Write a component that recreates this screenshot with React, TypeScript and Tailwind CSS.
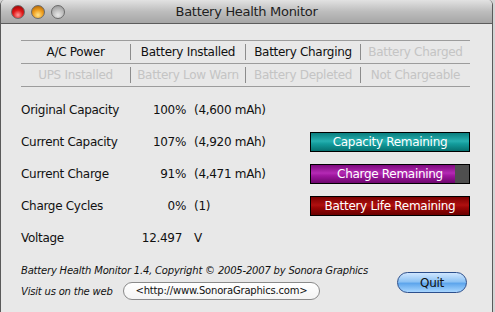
import React from "react";

const font = "font-['DejaVu_Sans',sans-serif]";

const statusRows = [
  [
    { label: "A/C Power", on: true },
    { label: "Battery Installed", on: true },
    { label: "Battery Charging", on: true },
    { label: "Battery Charged", on: false },
  ],
  [
    { label: "UPS Installed", on: false },
    { label: "Battery Low Warn", on: false },
    { label: "Battery Depleted", on: false },
    { label: "Not Chargeable", on: false },
  ],
];

const colWidths = ["w-[109px]", "w-[114px]", "w-[114px]", "w-[109px]"];

interface BarProps {
  label: string;
  pct: number;
  fill: string;
}

const Bar = ({ label, pct, fill }: BarProps) => (
  <div className="relative w-[160px] h-[20px] border border-black bg-[#4f4f4f] overflow-hidden">
    <div className={`h-full ${fill}`} style={{ width: `${pct}%` }} />
    <div className="absolute inset-0 flex items-center justify-center text-white text-[12px] tracking-[-0.3px]">
      {label}
    </div>
  </div>
);

interface DataRowProps {
  label: string;
  value: string;
  extra: string;
  bar?: BarProps;
  valueClass?: string;
}

const DataRow = ({ label, value, extra, bar, valueClass }: DataRowProps) => (
  <div className="flex items-center h-[32px]">
    <div className="w-[120px]">{label}</div>
    <div className={`w-[45px] text-right ${valueClass ?? ""}`}>{value}</div>
    <div className="w-[124px] pl-[8px]">{extra}</div>
    {bar && <Bar {...bar} />}
  </div>
);

const Light = ({ color }: { color: string }) => (
  <div className={`w-[14px] h-[14px] rounded-full border border-[#6a6a6a] ${color}`} />
);

export default function App() {
  return (
    <div className={`w-[495px] h-[312px] overflow-hidden bg-[#d4d4d4] ${font}`}>
      <div className="w-[493px] h-[312px] border-l border-r border-[#5a5a5a] rounded-t-[5px] overflow-hidden bg-[#e8e8e8]">
        {/* title bar */}
        <div className="relative h-[24px] flex items-center border-b border-[#5c5c5c] bg-[linear-gradient(#e2e2e2,#bdbdbd_50%,#a6a6a6)]">
          <div className="flex items-center gap-[6px] pl-[10px]">
            <Light color="bg-[radial-gradient(circle_at_50%_75%,#ff9a9a,#e01818_45%,#8a0000)]" />
            <Light color="bg-[radial-gradient(circle_at_50%_75%,#ffe48a,#f0a020_45%,#a05800)]" />
            <Light color="bg-[radial-gradient(circle_at_50%_75%,#e8e8e8,#bcbcbc_50%,#909090)]" />
          </div>
          <div className="absolute inset-0 flex items-center justify-center text-[13px] text-[#1e1e1e] tracking-[-0.3px]">
            Battery Health Monitor
          </div>
        </div>

        <div className="pl-[20px] pt-[16px] text-[12px] tracking-[-0.3px] text-[#111]">
          {/* status grid */}
          <div className="w-[449px] border-t border-[#9c9c9c]">
            {statusRows.map((row, i) => (
              <div key={i} className="flex items-center h-[23px] border-b border-[#9c9c9c]">
                {row.map((cell, j) => (
                  <React.Fragment key={cell.label}>
                    {j > 0 && <div className="w-px h-[16px] bg-[#8c8c8c]" />}
                    <div
                      className={`${colWidths[j]} text-center ${cell.on ? "text-[#111]" : "text-[#c4c4c4]"}`}
                    >
                      {cell.label}
                    </div>
                  </React.Fragment>
                ))}
              </div>
            ))}
          </div>

          {/* readings */}
          <div className="mt-[7px]">
            <DataRow label="Original Capacity" value="100%" extra="(4,600 mAh)" />
            <DataRow
              label="Current Capacity"
              value="107%"
              extra="(4,920 mAh)"
              bar={{
                label: "Capacity Remaining",
                pct: 100,
                fill: "bg-[linear-gradient(#0a7e7e,#27b0b0_45%,#139c9c_60%,#06706f)]",
              }}
            />
            <DataRow
              label="Current Charge"
              value="91%"
              extra="(4,471 mAh)"
              bar={{
                label: "Charge Remaining",
                pct: 91,
                fill: "bg-[linear-gradient(#7e0a7e,#b42ab4_45%,#9e169e_60%,#6e066e)]",
              }}
            />
            <DataRow
              label="Charge Cycles"
              value="0%"
              extra="(1)"
              bar={{
                label: "Battery Life Remaining",
                pct: 100,
                fill: "bg-[linear-gradient(#7a0000,#b01010_45%,#9a0606_60%,#6a0000)]",
              }}
            />
            <DataRow label="Voltage" value="12.497" extra="V" valueClass="pr-[4px]" />
          </div>

          {/* footer */}
          <div className="flex items-start mt-[8px]">
            <div className="flex flex-col italic text-[10px] tracking-[-0.2px]">
              <div className="h-[17px] flex items-center">
                Battery Health Monitor 1.4, Copyright © 2005-2007 by Sonora Graphics
              </div>
              <div className="flex items-center h-[24px]">
                <span>Visit us on the web</span>
                <button className="ml-[10px] h-[18px] px-[12px] rounded-full border border-[#8a8a8a] bg-[linear-gradient(#ffffff,#f4f4f4)] not-italic text-[10px] tracking-[-0.2px] text-[#111] leading-none">
                  &lt;http://www.SonoraGraphics.com&gt;
                </button>
              </div>
            </div>
            <button className="ml-auto mr-[25px] mt-[10px] w-[70px] h-[21px] rounded-full border border-[#2c4f8c] bg-[linear-gradient(#cfe6ff,#8ec3f4_45%,#5ea6ec_55%,#a8d6ff)] text-[12px] text-[#111] leading-none">
              Quit
            </button>
          </div>
        </div>
      </div>
    </div>
  );
}
